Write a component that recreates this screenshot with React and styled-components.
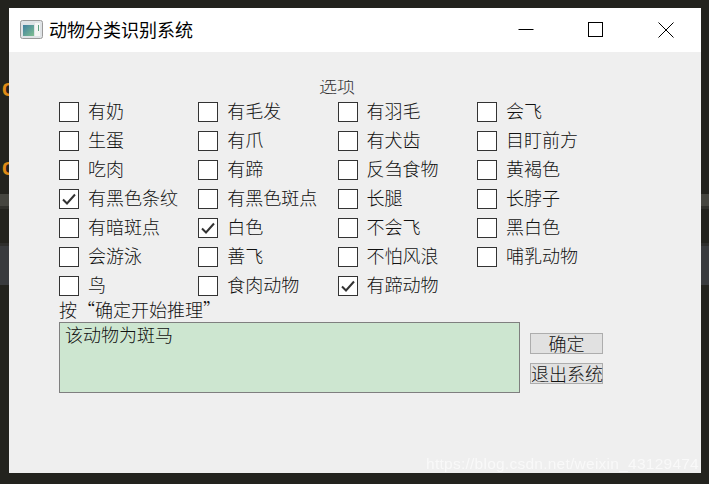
import React from "react";
import styled, { createGlobalStyle } from "styled-components";

const cjk = `"Noto Sans CJK SC", "Liberation Serif", serif`;

const GlobalStyle = createGlobalStyle`
  html, body {
    margin: 0;
    padding: 0;
  }
  body {
    font-family: ${cjk};
  }
`;

// dark editor showing behind the window, only its bands peek out at the sides
const Desktop = styled.div`
  position: relative;
  width: 709px;
  height: 484px;
  overflow: hidden;
  box-sizing: border-box;
  padding: 8px 8px 11px 9px;
  background: linear-gradient(
    180deg,
    #23231e 0,
    #23231e 194px,
    #45453f 194px,
    #45453f 206px,
    #30302b 206px,
    #30302b 209px,
    #23231e 209px,
    #23231e 243px,
    #2e2e2c 243px,
    #2e2e2c 246px,
    #393b3e 246px,
    #393b3e 285px,
    #23231e 285px,
    #23231e 100%
  );
`;

const CodeGlyph = styled.span`
  position: absolute;
  left: 2px;
  top: ${(p) => p.$top}px;
  font: bold 20px "Liberation Mono", monospace;
  line-height: 20px;
  color: #e08a16;
`;

const Window = styled.div`
  position: relative;
  height: 465px;
  overflow: hidden;
  display: flex;
  flex-direction: column;
  background: #efefef;
`;

const TitleBar = styled.div`
  flex: 0 0 44px;
  display: flex;
  align-items: center;
  background: #fff;
  padding: 0 1px 0 11px;
`;

const AppIcon = styled.svg`
  width: 23px;
  height: 20px;
  margin-right: 6px;
`;

const Title = styled.div`
  flex: 1;
  padding-bottom: 3px;
  font-size: 18px;
  color: #000;
`;

const Captions = styled.div`
  display: flex;
  gap: 1px;
`;

const CaptionButton = styled.div`
  width: 69px;
  height: 44px;
  display: flex;
  align-items: center;
  justify-content: center;
`;

const Content = styled.div`
  flex: 1;
  display: flex;
  flex-direction: column;
  padding: 28px 0 0 50px;
`;

// the group box title is cut off along its top in the original too
const GroupTitle = styled.div`
  width: 556px;
  height: 15px;
  overflow: hidden;
  display: flex;
  align-items: flex-end;
  justify-content: center;
  font-size: 18px;
  font-weight: 300;
  line-height: 20px;
  color: #333;
`;

const OptionGrid = styled.div`
  display: grid;
  grid-template-columns: repeat(4, 139.3px);
  grid-auto-rows: 29px;
  margin-top: 2px;
`;

const Option = styled.label`
  display: flex;
  align-items: center;
  gap: 9px;
`;

const Box = styled.span`
  width: 18px;
  height: 18px;
  display: flex;
  align-items: center;
  justify-content: center;
  background: #fff;
  border: 1px solid #333;
`;

const Label = styled.span`
  padding-bottom: 3px;
  font-size: 18px;
  font-weight: 300;
  color: #111;
  white-space: nowrap;
`;

const Hint = styled.div`
  height: 22px;
  margin-top: -2px;
  font-size: 18px;
  font-weight: 300;
  line-height: 22px;
  color: #111;
`;

const OutputRow = styled.div`
  display: flex;
  gap: 10px;
  margin-top: 2px;
`;

const Output = styled.div`
  box-sizing: border-box;
  width: 461px;
  height: 71px;
  padding: 1px 5px;
  background: #cde6d0;
  border: 1px solid #7f7f7f;
  font-size: 18px;
  font-weight: 300;
  line-height: 21px;
  color: #111;
`;

const Actions = styled.div`
  display: flex;
  flex-direction: column;
  gap: 9px;
  padding-top: 11px;
`;

const ActionButton = styled.button`
  width: 73px;
  height: 21px;
  padding: 0;
  background: #e1e1e1;
  border: 1px solid #adadad;
  font-family: ${cjk};
  font-size: 18px;
  font-weight: 300;
  line-height: 19px;
  color: #111;
  white-space: nowrap;
`;

const Watermark = styled.div`
  position: absolute;
  right: 2px;
  bottom: 0;
  font: 15.5px "Liberation Sans", sans-serif;
  line-height: 18px;
  letter-spacing: 0.25px;
  color: rgba(255, 255, 255, 0.62);
  filter: blur(0.4px);
`;

const options = [
  "有奶", "有毛发", "有羽毛", "会飞",
  "生蛋", "有爪", "有犬齿", "目盯前方",
  "吃肉", "有蹄", "反刍食物", "黄褐色",
  "有黑色条纹", "有黑色斑点", "长腿", "长脖子",
  "有暗斑点", "白色", "不会飞", "黑白色",
  "会游泳", "善飞", "不怕风浪", "哺乳动物",
  "鸟", "食肉动物", "有蹄动物",
];
const checked = ["有黑色条纹", "白色", "有蹄动物"];

function Check() {
  return (
    <svg width="14" height="12" viewBox="0 0 14 12" fill="none">
      <path d="M1 6.5 L5 10.5 L13 1.5" stroke="#333" strokeWidth="2" />
    </svg>
  );
}

export default function App() {
  return (
    <>
      <GlobalStyle />
      <Desktop>
        <CodeGlyph $top={81}>C</CodeGlyph>
        <CodeGlyph $top={160}>C</CodeGlyph>
        <Window>
          <TitleBar>
            <AppIcon viewBox="0 0 23 20">
              <defs>
                <linearGradient id="pane" x1="0" y1="0" x2="1" y2="1">
                  <stop offset="0" stopColor="#3f7fa0" />
                  <stop offset="1" stopColor="#7fbf90" />
                </linearGradient>
              </defs>
              <rect x="0.5" y="0.5" width="22" height="18" rx="2" fill="#dfe3e6" stroke="#9a9a9a" />
              <rect x="3" y="5" width="11" height="11" fill="url(#pane)" />
              <rect x="15" y="3" width="5" height="13" fill="#f4f6f4" />
              <rect x="18" y="5" width="1" height="6" fill="#5f9f80" />
            </AppIcon>
            <Title>动物分类识别系统</Title>
            <Captions>
              <CaptionButton>
                <svg width="16" height="16" viewBox="0 0 16 16">
                  <path d="M0.5 7.5 H15.5" stroke="#000" />
                </svg>
              </CaptionButton>
              <CaptionButton>
                <svg width="16" height="16" viewBox="0 0 16 16">
                  <rect x="0.5" y="0.5" width="14" height="14" fill="none" stroke="#000" />
                </svg>
              </CaptionButton>
              <CaptionButton>
                <svg width="16" height="16" viewBox="0 0 16 16">
                  <path d="M0.5 0.5 L15.5 15.5 M15.5 0.5 L0.5 15.5" stroke="#000" />
                </svg>
              </CaptionButton>
            </Captions>
          </TitleBar>
          <Content>
            <GroupTitle>选项</GroupTitle>
            <OptionGrid>
              {options.map((name) => (
                <Option key={name}>
                  <Box>{checked.includes(name) && <Check />}</Box>
                  <Label>{name}</Label>
                </Option>
              ))}
            </OptionGrid>
            <Hint>按“确定开始推理”</Hint>
            <OutputRow>
              <Output>该动物为斑马</Output>
              <Actions>
                <ActionButton>确定</ActionButton>
                <ActionButton>退出系统</ActionButton>
              </Actions>
            </OutputRow>
          </Content>
          <Watermark>https://blog.csdn.net/weixin_43129474</Watermark>
        </Window>
      </Desktop>
    </>
  );
}
